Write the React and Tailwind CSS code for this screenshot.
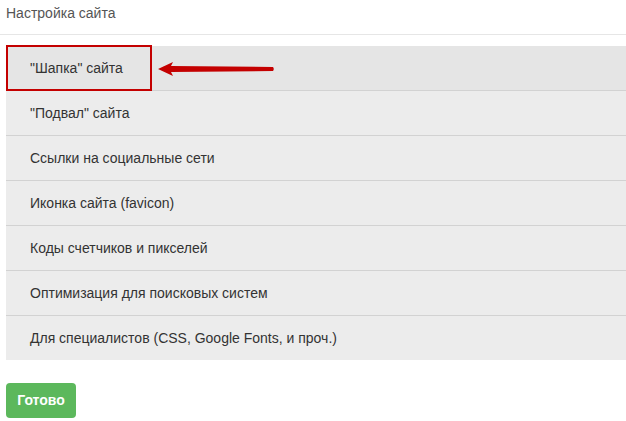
const items = [
  '"Шапка" сайта',
  '"Подвал" сайта',
  'Ссылки на социальные сети',
  'Иконка сайта (favicon)',
  'Коды счетчиков и пикселей',
  'Оптимизация для поисковых систем',
  'Для специалистов (CSS, Google Fonts, и проч.)',
]

function Arrow() {
  return (
    <svg className="absolute left-[150px] top-[15px]" width="122" height="16" viewBox="0 0 122 16">
      <path d="M2 8 L17 1 L15 5 L117 6 Q118.5 8 117 10 L15 11 L17 15 Z" fill="#c40000" />
    </svg>
  )
}

export default function App() {
  return (
    <div className="w-[626px] h-[421px] bg-white font-['Liberation_Sans',Arial,sans-serif]">
      <div className="px-[6px] pt-[4px] h-[34px] text-[14px] leading-[18px] text-[#555]">Настройка сайта</div>
      <div className="border-t border-[#e6e6e6]" />
      <div className="ml-[6px] mt-[11px]">
        {items.map((item, i) => (
          <div
            key={item}
            className={`relative flex items-center pl-[24px] text-[14px] text-[#333] ${i === 0 ? 'bg-[#e5e5e5]' : 'bg-[#ececec]'} ${i < items.length - 1 ? 'h-[45px] border-b border-[#d2d2d2]' : 'h-[44px]'}`}
          >
            {item}
            {i === 0 && (
              <>
                <div className="absolute left-0 top-[-1px] w-[146px] h-[46px] border-2 border-[#c40000]" />
                <Arrow />
              </>
            )}
          </div>
        ))}
      </div>
      <div className="ml-[6px] mt-[23px]">
        <button className="w-[70px] h-[35px] rounded-[4px] bg-[#5cb85c] text-white text-[14px] font-bold">Готово</button>
      </div>
    </div>
  )
}
